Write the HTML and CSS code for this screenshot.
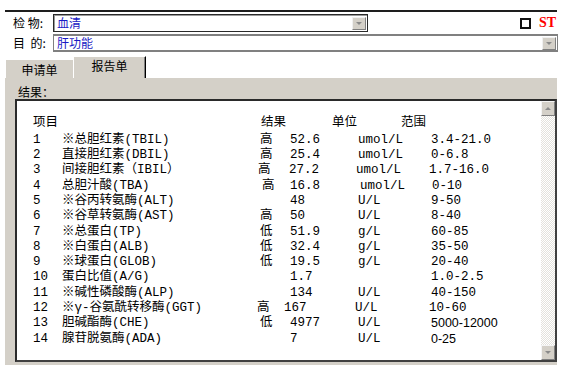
FILE: index.html
```html
<!DOCTYPE html>
<html lang="zh-CN">
<head>
  <meta charset="UTF-8">
  <title>检验报告单</title>
  <link rel="stylesheet" href="styles.css">
</head>
<body>
  <div class="window">
    <div class="fields">
      <div class="field">
        <span class="label">检&nbsp;物:</span>
        <div class="combo short">
          <span class="combo-text">血清</span>
          <span class="drop"><span class="arrow-down"></span></span>
        </div>
        <div class="st">
          <span class="check"></span>
          <span class="st-text">ST</span>
        </div>
      </div>
      <div class="field">
        <span class="label">目&nbsp;&nbsp;的:</span>
        <div class="combo wide">
          <span class="combo-text">肝功能</span>
          <span class="drop"><span class="arrow-down"></span></span>
        </div>
      </div>
    </div>

    <div class="tabs">
      <div class="tab">申请单</div>
      <div class="tab active">报告单</div>
    </div>

    <div class="panel">
      <div class="panel-title">结果：</div>
      <div class="result-box">
        <div class="report">
          <div class="head">
            <span>项目</span>
            <span>结果</span>
            <span>单位</span>
            <span>范围</span>
          </div>
          <div class="row"><span>1</span><span>※总胆红素(TBIL)</span><span class="flag">高</span><span class="val">52.6</span><span class="unit">umol/L</span><span class="range">3.4-21.0</span></div>
          <div class="row"><span>2</span><span>直接胆红素(DBIL)</span><span class="flag">高</span><span class="val">25.4</span><span class="unit">umol/L</span><span class="range">0-6.8</span></div>
          <div class="row left"><span>3</span><span>间接胆红素（IBIL）</span><span class="flag">高</span><span class="val">27.2</span><span class="unit">umol/L</span><span class="range">1.7-16.0</span></div>
          <div class="row right"><span>4</span><span>总胆汁酸(TBA)</span><span class="flag">高</span><span class="val">16.8</span><span class="unit">umol/L</span><span class="range">0-10</span></div>
          <div class="row"><span>5</span><span>※谷丙转氨酶(ALT)</span><span class="flag"></span><span class="val">48</span><span class="unit">U/L</span><span class="range">9-50</span></div>
          <div class="row"><span>6</span><span>※谷草转氨酶(AST)</span><span class="flag">高</span><span class="val">50</span><span class="unit">U/L</span><span class="range">8-40</span></div>
          <div class="row"><span>7</span><span>※总蛋白(TP)</span><span class="flag">低</span><span class="val">51.9</span><span class="unit">g/L</span><span class="range">60-85</span></div>
          <div class="row"><span>8</span><span>※白蛋白(ALB)</span><span class="flag">低</span><span class="val">32.4</span><span class="unit">g/L</span><span class="range">35-50</span></div>
          <div class="row"><span>9</span><span>※球蛋白(GLOB)</span><span class="flag">低</span><span class="val">19.5</span><span class="unit">g/L</span><span class="range">20-40</span></div>
          <div class="row"><span>10</span><span>蛋白比值(A/G)</span><span class="flag"></span><span class="val">1.7</span><span class="unit"></span><span class="range">1.0-2.5</span></div>
          <div class="row"><span>11</span><span>※碱性磷酸酶(ALP)</span><span class="flag"></span><span class="val">134</span><span class="unit">U/L</span><span class="range">40-150</span></div>
          <div class="row far-left"><span>12</span><span>※γ-谷氨酰转移酶(GGT)</span><span class="flag">高</span><span class="val">167</span><span class="unit">U/L</span><span class="range">10-60</span></div>
          <div class="row"><span>13</span><span>胆碱酯酶(CHE)</span><span class="flag">低</span><span class="val">4977</span><span class="unit">U/L</span><span class="range sans">5000-12000</span></div>
          <div class="row"><span>14</span><span>腺苷脱氨酶(ADA)</span><span class="flag"></span><span class="val">7</span><span class="unit">U/L</span><span class="range sans">0-25</span></div>
        </div>
        <div class="scrollbar">
          <span class="scroll-btn"><span class="arrow-up"></span></span>
          <span class="scroll-track"></span>
          <span class="scroll-btn"><span class="arrow-down"></span></span>
        </div>
      </div>
    </div>
  </div>
</body>
</html>
```

FILE: styles.css
```css
body {
  margin: 0;
  background: #fff;
  font-family: "Noto Sans CJK SC", sans-serif;
  font-size: 12px;
  color: #000;
}

.window {
  margin: 10px 8px 0 5px;
  border-top: 2px solid #1e1e1e;
}

/* top form */
.fields {
  display: flex;
  flex-direction: column;
  gap: 2px;
  padding-top: 2px;
}

.field {
  display: flex;
  align-items: center;
  height: 18px;
  padding-left: 8px;
}

.label {
  width: 40px;
  flex: none;
  line-height: 14px;
}

.combo {
  box-sizing: border-box;
  height: 18px;
  display: flex;
  align-items: center;
  justify-content: space-between;
  background: #fff;
  padding: 0 1px 0 3px;
}

.combo.short {
  width: 315px;
  border: 1px solid #2a2a2a;
  box-shadow: inset 1px 1px 0 #9a9a9a;
}

.combo.wide {
  flex: 1;
  margin-right: -1px;
  border: 1px solid #808080;
  border-top-width: 2px;
  border-bottom-width: 2px;
}

.combo-text {
  color: #1a1ac4;
  line-height: 14px;
}

.drop {
  box-sizing: border-box;
  width: 14px;
  height: 13px;
  background: #d4d0c8;
  border: 1px solid #f0f0f0;
  border-right-color: #808080;
  border-bottom-color: #808080;
  display: flex;
  align-items: center;
  justify-content: center;
}

.arrow-down,
.arrow-up {
  width: 0;
  height: 0;
  border-left: 3px solid transparent;
  border-right: 3px solid transparent;
}

.arrow-down {
  border-top: 3px solid #8a8a8a;
}

.arrow-up {
  border-bottom: 3px solid #8a8a8a;
}

.st {
  margin-left: auto;
  display: flex;
  align-items: center;
  gap: 8px;
  padding-right: 1px;
}

.check {
  box-sizing: border-box;
  width: 11px;
  height: 11px;
  border: 2px solid #111;
}

.st-text {
  font-family: "Liberation Serif", serif;
  color: #f00;
  font-weight: bold;
  font-size: 14px;
  line-height: 14px;
}

/* tabs */
.tabs {
  display: flex;
  align-items: flex-end;
  height: 22px;
  margin-top: 4px;
}

.tab {
  box-sizing: border-box;
  width: 68px;
  height: 19px;
  background: #d4d0c8;
  border-left: 1px solid #fff;
  border-top: 1px solid #fff;
  text-align: center;
  line-height: 20px;
}

.tab.active {
  width: 73px;
  height: 22px;
  line-height: 18px;
  border-right: 1px solid #000;
  box-shadow: inset -1px 0 0 #808080;
}

/* panel */
.panel {
  background: #d4d0c8;
  padding: 0 0 3px 10px;
}

.panel-title {
  box-sizing: border-box;
  height: 21px;
  padding: 7px 0 0 3px;
  line-height: 14px;
}

.result-box {
  box-sizing: border-box;
  height: 263px;
  display: flex;
  background: #fff;
  border: 2px solid #404040;
  border-top-color: #2a2a2a;
  border-left-color: #2a2a2a;
}

.report {
  flex: 1;
  padding: 15px 0 0 16px;
  font-family: "Liberation Mono", "Noto Sans CJK SC", monospace;
  font-size: 12.5px;
  line-height: 15.3px;
}

.head {
  display: grid;
  grid-template-columns: 228px 71px 69px auto;
  margin-bottom: 1.5px;
}

.row {
  display: grid;
  grid-template-columns: 29px 198px 30px 68px 73px auto;
}

.row.left .flag,
.row.left .unit,
.row.left .range {
  margin-left: -2px;
}

.row.left .val {
  margin-left: -1px;
}

.row.right .flag,
.row.right .unit {
  margin-left: 2px;
}

.row.right .range {
  margin-left: 1px;
}

.row.far-left .flag,
.row.far-left .unit {
  margin-left: -3px;
}

.row.far-left .val {
  margin-left: -6px;
}

.row.far-left .range {
  margin-left: -2px;
}

.sans {
  font-family: "Liberation Sans", sans-serif;
}

/* scrollbar */
.scrollbar {
  width: 14px;
  display: flex;
  flex-direction: column;
}

.scroll-btn {
  box-sizing: border-box;
  height: 15px;
  background: #d4d0c8;
  border: 1px solid #f4f4f4;
  border-right-color: #808080;
  border-bottom-color: #808080;
  display: flex;
  align-items: center;
  justify-content: center;
}

.scroll-track {
  flex: 1;
  background: repeating-conic-gradient(#fff 0 25%, #e4e2dc 0 50%) 0 0 / 2px 2px;
}
```
